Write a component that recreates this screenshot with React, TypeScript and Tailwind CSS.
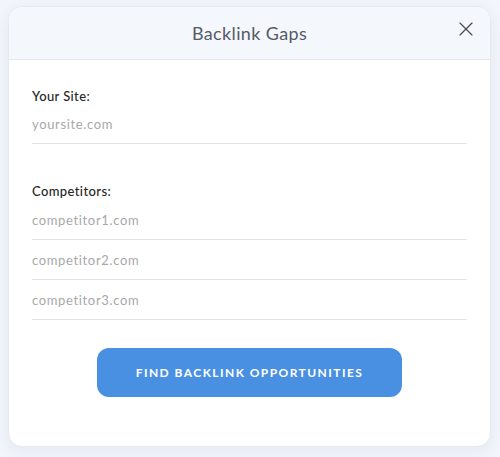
import { X } from 'lucide-react'

type FieldProps = {
  placeholder: string
  height: string
}

function Field({ placeholder, height }: FieldProps) {
  return (
    <input
      type="text"
      placeholder={placeholder}
      className={`${height} w-full border-b border-[#e2e2e2] bg-transparent text-[13px] tracking-[0.05em] text-[#333] outline-none placeholder:text-[#a8a8a8]`}
    />
  )
}

export default function App() {
  return (
    <div
      className="h-[457px] w-[500px] overflow-hidden bg-[#f2f5fb] px-[8px] pt-[6px]"
      style={{ fontFamily: 'Lato, "Open Sans", sans-serif' }}
    >
      <div className="h-[441px] w-[483px] overflow-hidden rounded-[14px] border border-[#e6e9ef] bg-white shadow-[0_4px_14px_rgba(60,80,130,0.08)]">
        <div className="grid h-[53px] grid-cols-[1fr_auto_1fr] border-b border-[#e3e6ec] bg-[#f4f7fc]">
          <div />
          <h2 className="self-center text-[18px] tracking-[0.02em] text-[#565b66]">Backlink Gaps</h2>
          <div className="flex justify-end pt-[10px] pr-[12px]">
            <button className="h-[24px] text-[#4a4a4a]">
              <X size={24} strokeWidth={1.15} />
            </button>
          </div>
        </div>

        <div className="flex flex-col px-[23px] pt-[27px]">
          <label className="h-[18px] text-[13px] leading-[18px] font-medium tracking-[0.03em] text-[#262626]">
            Your Site:
          </label>
          <Field placeholder="yoursite.com" height="h-[39px]" />

          <label className="mt-[38px] h-[18px] text-[13px] leading-[18px] font-medium tracking-[0.03em] text-[#262626]">
            Competitors:
          </label>
          <Field placeholder="competitor1.com" height="h-[40px]" />
          <Field placeholder="competitor2.com" height="h-[40px]" />
          <Field placeholder="competitor3.com" height="h-[40px]" />

          <div className="mt-[28px] flex justify-center">
            <button className="h-[49px] w-[305px] rounded-[12px] bg-[#4a90e2] text-[12px] font-bold tracking-[0.12em] text-white">
              FIND BACKLINK OPPORTUNITIES
            </button>
          </div>
        </div>
      </div>
    </div>
  )
}
